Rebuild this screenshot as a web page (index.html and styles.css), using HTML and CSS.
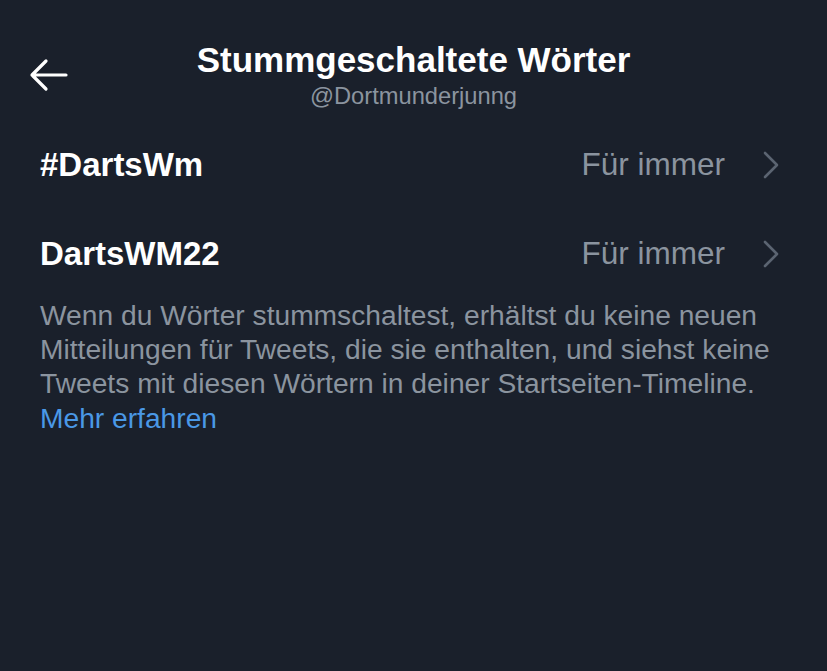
FILE: index.html
```html
<!DOCTYPE html>
<html lang="de">
<head>
<meta charset="utf-8">
<link rel="stylesheet" href="styles.css">
</head>
<body>
<div class="screen">
  <header class="header">
    <button class="back" aria-label="Zurück">
      <svg width="40" height="34" viewBox="0 0 40 34"><path d="M17 3 L3 17 L17 31 M3 17 H37" fill="none" stroke="#ffffff" stroke-width="3.2" stroke-linecap="round" stroke-linejoin="round"/></svg>
    </button>
    <div class="titles">
      <h1 class="title">Stummgeschaltete Wörter</h1>
      <div class="handle">@Dortmunderjunng</div>
    </div>
  </header>
  <ul class="list">
    <li class="row">
      <span class="word">#DartsWm</span>
      <span class="dur">Für immer</span>
      <svg class="chev" width="16" height="28" viewBox="0 0 16 28"><path d="M2 2 L14 14 L2 26" fill="none" stroke="#5b6471" stroke-width="2.6" stroke-linecap="round" stroke-linejoin="round"/></svg>
    </li>
    <li class="row">
      <span class="word">DartsWM22</span>
      <span class="dur">Für immer</span>
      <svg class="chev" width="16" height="28" viewBox="0 0 16 28"><path d="M2 2 L14 14 L2 26" fill="none" stroke="#5b6471" stroke-width="2.6" stroke-linecap="round" stroke-linejoin="round"/></svg>
    </li>
  </ul>
  <p class="info">Wenn du Wörter stummschaltest, erhältst du keine neuen Mitteilungen für Tweets, die sie enthalten, und siehst keine Tweets mit diesen Wörtern in deiner Startseiten-Timeline. <a class="link" href="#">Mehr erfahren</a></p>
</div>
</body>
</html>
```

FILE: styles.css
```css
* { box-sizing: border-box; }
html, body {
  margin: 0;
  padding: 0;
  background: #1a202b;
}
body {
  font-family: "Liberation Sans", Arial, sans-serif;
  color: #ffffff;
}
.screen {
  width: 827px;
  height: 671px;
  background: #1a202b;
  overflow: hidden;
}
.header {
  position: relative;
  display: flex;
  justify-content: center;
  padding-top: 40px;
  height: 120px;
}
.back {
  position: absolute;
  left: 29px;
  top: 58px;
  background: none;
  border: 0;
  padding: 0;
  display: flex;
}
.titles {
  display: flex;
  flex-direction: column;
  align-items: center;
}
.title {
  margin: 0;
  font-size: 35px;
  font-weight: 700;
  line-height: 40px;
  letter-spacing: 0;
}
.handle {
  font-size: 23.7px;
  line-height: 28px;
  color: #8b949f;
  margin-top: 2px;
}
.list {
  list-style: none;
  margin: 0;
  padding: 0;
}
.row {
  display: flex;
  align-items: center;
  height: 89px;
  padding: 0 48px 0 40px;
}
.word {
  flex: 1;
  font-size: 33px;
  font-weight: 700;
}
.dur {
  font-size: 31.5px;
  color: #8b949f;
  margin-right: 38px;
}
.chev { display: block; }
.info {
  margin: 0;
  padding: 0 40px;
  font-size: 28.2px;
  line-height: 34.2px;
  color: #8b949f;
}
.link {
  color: #4a98e6;
  text-decoration: none;
}
```
